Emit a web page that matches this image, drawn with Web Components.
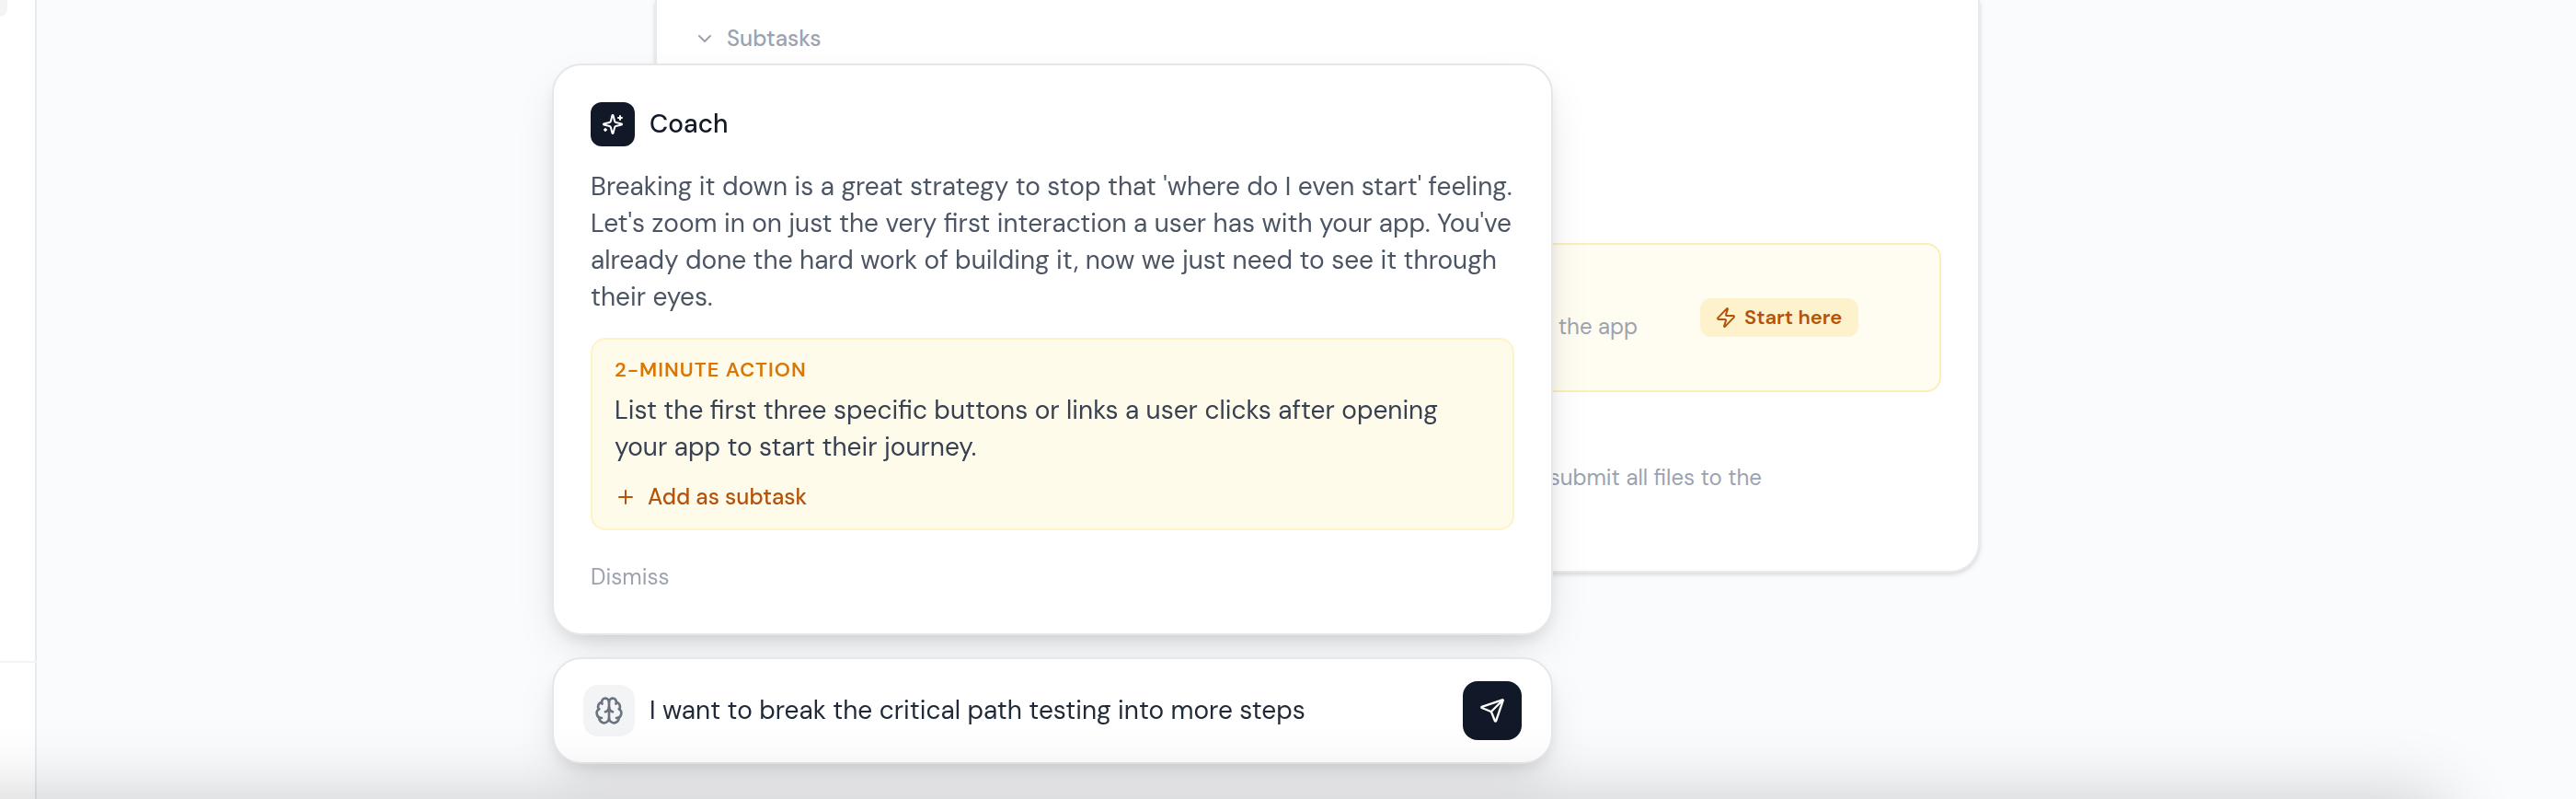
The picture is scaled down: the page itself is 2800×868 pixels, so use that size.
<!doctype html>
<html lang="en">
<head>
<meta charset="utf-8">
<meta name="viewport" content="width=device-width, initial-scale=1">
<title>Subtasks and Coach</title>
<style>
  body {
    margin: 0;
    font-family: "DM Sans", Inter, "Open Sans", sans-serif;
    font-size: 24px;
    line-height: 32px;
    color: #111827;
    background: #fafbfd;
  }
</style>
</head>
<body>
<app-shell>
  <side-rail slot="side"></side-rail>
  <task-card slot="main">
    <subtask-row highlighted>the app</subtask-row>
    <subtask-row>submit all files to the</subtask-row>
  </task-card>
  <coach-card slot="dock">
    Breaking it down is a great strategy to stop that 'where do I even start' feeling. Let's zoom in on just the very first interaction a user has with your app. You've already done the hard work of building it, now we just need to see it through their eyes.
    <quick-action slot="action">List the first three specific buttons or links a user clicks after opening your app to start their journey.</quick-action>
  </coach-card>
  <coach-composer slot="dock"></coach-composer>
</app-shell>

<script>
const base = `<style>
  *, :host { box-sizing: border-box; }
  button, input { font: inherit; color: inherit; background: none; border: 0; padding: 0; margin: 0; }
  button { cursor: pointer; }
</style>`;

function define(name, html) {
  const template = document.createElement('template');
  template.innerHTML = base + html;
  customElements.define(name, class extends HTMLElement {
    constructor() {
      super();
      this.attachShadow({ mode: 'open' }).append(template.content.cloneNode(true));
    }
  });
}

/* Line icons on a 24-unit grid */
const ICONS = {
  chevron: '<path d="m6 9 6 6 6-6"/>',
  plus: '<path d="M5 12h14M12 5v14"/>',
  zap: '<path d="M4 14a1 1 0 0 1-.78-1.63l9.9-10.2a.5.5 0 0 1 .86.46l-1.92 6.02A1 1 0 0 0 13 10h7a1 1 0 0 1 .78 1.63l-9.9 10.2a.5.5 0 0 1-.86-.46l1.92-6.02A1 1 0 0 0 11 14z"/>',
  sparkles: '<path d="M9.937 15.5A2 2 0 0 0 8.5 14.063l-6.135-1.582a.5.5 0 0 1 0-.962L8.5 9.936A2 2 0 0 0 9.937 8.5l1.582-6.135a.5.5 0 0 1 .963 0L14.063 8.5A2 2 0 0 0 15.5 9.937l6.135 1.581a.5.5 0 0 1 0 .964L15.5 14.063a2 2 0 0 0-1.437 1.437l-1.582 6.135a.5.5 0 0 1-.963 0zM20 3v4M22 5h-4M4 17v2M5 18H3"/>',
  send: '<path d="M14.536 21.686a.5.5 0 0 0 .937-.024l6.5-19a.496.496 0 0 0-.635-.635l-19 6.5a.5.5 0 0 0-.024.937l7.93 3.18a2 2 0 0 1 1.112 1.11z"/><path d="m21.854 2.147-10.94 10.939"/>',
  brain: '<path d="M12 18V5"/><path d="M15 13a4.17 4.17 0 0 1-3-4 4.17 4.17 0 0 1-3 4"/><path d="M17.598 6.5A3 3 0 1 0 12 5a3 3 0 1 0-5.598 1.5"/><path d="M17.997 5.125a4 4 0 0 1 2.526 5.77"/><path d="M18 18a4 4 0 0 0 2-7.464"/><path d="M19.967 17.483A4 4 0 1 1 12 18a4 4 0 1 1-7.967-.517"/><path d="M6 18a4 4 0 0 1-2-7.464"/><path d="M6.003 5.125a4 4 0 0 0-2.526 5.77"/>'
};
customElements.define('line-icon', class extends HTMLElement {
  constructor() {
    super();
    this.attachShadow({ mode: 'open' });
  }
  connectedCallback() {
    this.shadowRoot.innerHTML = `<style>
      :host { display: block; flex: none; width: var(--size, 24px); height: var(--size, 24px); }
      svg { display: block; width: 100%; height: 100%; fill: none; stroke: currentColor;
            stroke-width: 2; stroke-linecap: round; stroke-linejoin: round; }
    </style><svg viewBox="0 0 24 24" aria-hidden="true">${ICONS[this.getAttribute('name')]}</svg>`;
  }
});

define('app-shell', `<style>
  :host { display: flex; min-height: 100vh; }
  main { flex: 1; min-width: 0; padding: 0 48px 0 72px; }
  .dock { position: fixed; left: 0; right: 512px; bottom: 38px; display: flex;
          flex-direction: column; align-items: center; gap: 24px; }
  /* soft shade rising from below the window */
  .shade { position: fixed; top: 100%; left: -200px; right: 144px; height: 200px;
           box-shadow: 0 0 80px rgba(0, 0, 0, .2); pointer-events: none; }
</style>
<slot name="side"></slot>
<main><slot name="main"></slot></main>
<div class="dock"><slot name="dock"></slot></div>
<div class="shade"></div>`);

define('side-rail', `<style>
  :host { display: flex; flex-direction: column; justify-content: space-between; flex: none;
          width: 40px; background: linear-gradient(#e9eaed, #e9eaed) right / 2px 100% no-repeat #fff; }
  .item { width: 8px; height: 18px; background: #f3f4f6; border-radius: 0 0 16px 0; }
  .foot { height: 150px; border-top: 2px solid #f3f4f6; }
</style>
<div class="item"></div><div class="foot"></div>`);

define('task-card', `<style>
  :host { display: block; max-width: 1440px; margin: 0 auto; padding: 24px 40px 40px;
          background: #fff; border: solid #e9eaed; border-width: 0 2px 2px;
          border-radius: 0 0 32px 32px;
          box-shadow: 0 2px 6px rgba(0, 0, 0, .1), 0 2px 4px rgba(0, 0, 0, .06); }
  button { display: flex; align-items: center; gap: 12px; height: 36px; color: #9ca3af; font-weight: 500; }
  .list { display: grid; gap: 12px; padding-top: 204px; }
</style>
<button type="button" aria-expanded="true"><line-icon name="chevron"></line-icon>Subtasks</button>
<div class="list"><slot></slot></div>`);

define('subtask-row', `<style>
  :host { display: flex; align-items: center; justify-content: flex-end; height: 142px;
          padding-right: 193px; border: 2px solid transparent; border-radius: 16px; color: #9ca3af; }
  :host([highlighted]) { height: 162px; padding-right: 88px; gap: 68px; background: #fffdf1; border-color: #fbeeb8; }
  .text { padding-top: 20px; }
  .badge { display: none; align-items: center; gap: 8px; width: 172px; height: 42px; padding-left: 16px;
           border-radius: 12px; background: #fdf2cc; color: #b45309; font-size: 22px; font-weight: 600; }
  :host([highlighted]) .badge { display: flex; }
</style>
<span class="text"><slot></slot></span>
<span class="badge"><line-icon name="zap"></line-icon>Start here</span>`);

const PANEL = `width: 100%; max-width: 1088px; border: 2px solid #e5e7eb; border-radius: 32px; background: #fff;
  box-shadow: 0 20px 50px -10px rgba(0, 0, 0, .13), 0 8px 20px -6px rgba(0, 0, 0, .12);`;

define('coach-card', `<style>
  :host { display: block; ${PANEL} padding: 40px; }
  header { display: flex; align-items: center; gap: 16px; }
  .tile { display: grid; place-items: center; width: 48px; height: 48px; border-radius: 12px;
          background: #111827; color: #fff; }
  h2 { margin: 0; font-size: 28px; line-height: 40px; font-weight: 500; }
  p { margin: 24px 0; font-size: 28px; line-height: 40px; color: #4b5563; }
  .dismiss { display: block; margin-top: 30px; height: 42px; color: #9ca3af; }
</style>
<header><span class="tile"><line-icon name="sparkles"></line-icon></span><h2>Coach</h2></header>
<p><slot></slot></p>
<slot name="action"></slot>
<button class="dismiss" type="button">Dismiss</button>`);

define('quick-action', `<style>
  :host { display: block; padding: 16px 24px; border: 2px solid #fef3c7; border-radius: 16px; background: #fffbeb; }
  h3 { margin: 0 0 8px; font-size: 22px; line-height: 33px; font-weight: 600; letter-spacing: 1px; color: #d97706; }
  p { margin: 0 0 16px; font-size: 28px; line-height: 40px; color: #374151; }
  button { display: flex; align-items: center; gap: 12px; height: 36px; font-weight: 500; color: #b45309; }
</style>
<h3>2-MINUTE ACTION</h3>
<p><slot></slot></p>
<button type="button"><line-icon name="plus"></line-icon>Add as subtask</button>`);

define('coach-composer', `<style>
  :host { display: block; ${PANEL} }
  form { display: flex; align-items: center; gap: 16px; padding: 24px 32px; }
  .mode { display: grid; place-items: center; flex: none; width: 56px; height: 56px; border-radius: 16px;
          background: #f3f4f6; color: #6b7280; --size: 32px; }
  input { flex: 1; min-width: 0; height: 40px; padding-bottom: 2px; font-size: 28px; color: #1f2937; outline: 0; }
  .send { display: grid; place-items: center; flex: none; width: 64px; height: 64px; border-radius: 16px;
          background: #111827; color: #fff; --size: 28px; }
</style>
<form>
  <button class="mode" type="button" aria-label="Coach mode"><line-icon name="brain"></line-icon></button>
  <input type="text" aria-label="Message to coach" value="I want to break the critical path testing into more steps">
  <button class="send" type="button" aria-label="Send"><line-icon name="send"></line-icon></button>
</form>`);
</script>
</body>
</html>
